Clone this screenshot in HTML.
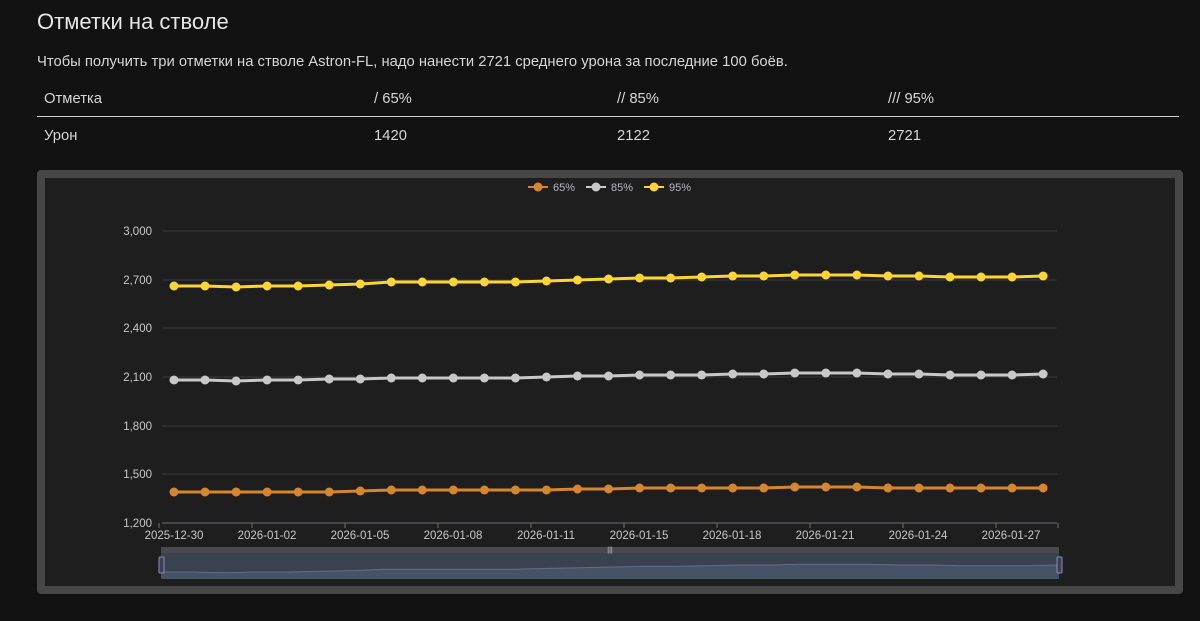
<!DOCTYPE html>
<html><head><meta charset="utf-8"><style>
body{margin:0;width:1200px;height:621px;background:#121212;font-family:"Liberation Sans","DejaVu Sans",sans-serif;color:#ddd;overflow:hidden;position:relative}
h1{position:absolute;left:37px;top:9px;margin:0;font-weight:normal;font-size:22px;color:#e6e6e6}
.p{position:absolute;left:37px;top:54px;font-size:14.8px;color:#d6d6d6}
.row{position:absolute;left:37px;width:1142px;height:36px;font-size:14.8px;color:#d6d6d6}
.row span{position:absolute;top:11px}
.frame{position:absolute;left:37px;top:170px;width:1130px;height:408px;border:8px solid #474747;border-radius:4px;background:#1e1e1e}
svg{position:absolute;left:0;top:0}
</style></head><body>
<h1>Отметки на стволе</h1>
<div class="p">Чтобы получить три отметки на стволе Astron-FL, надо нанести 2721 среднего урона за последние 100 боёв.</div>
<div class="row" style="top:80px;border-bottom:1px solid #cfcfcf"><span style="left:7px">Отметка</span><span style="left:337px">/ 65%</span><span style="left:580px">// 85%</span><span style="left:851px">/// 95%</span></div>
<div class="row" style="top:117px"><span style="left:7px">Урон</span><span style="left:337px">1420</span><span style="left:580px">2122</span><span style="left:851px">2721</span></div>
<div class="frame"></div>
<svg id="s" width="1200" height="621" font-family="Liberation Sans, sans-serif" font-size="11.5"></svg>
<script>
var s=document.getElementById('s'),h='';
var ys=[231,280,328,377,426,474,523],lb=['3,000','2,700','2,400','2,100','1,800','1,500','1,200'];
for(var i=0;i<7;i++){h+='<line x1="162" x2="1057" y1="'+ys[i]+'" y2="'+ys[i]+'" stroke="'+(i==6?'#6e7079':'#3a3a40')+'"/>';h+='<text x="152" y="'+(ys[i]+4)+'" text-anchor="end" fill="#c8c8c8">'+lb[i]+'</text>';}
var d=['2025-12-30','2026-01-02','2026-01-05','2026-01-08','2026-01-11','2026-01-15','2026-01-18','2026-01-21','2026-01-24','2026-01-27'];
for(i=0;i<10;i++){var x=174+i*93;h+='<line x1="'+(x-15)+'" x2="'+(x-15)+'" y1="523" y2="528" stroke="#6e7079"/><text x="'+x+'" y="539" text-anchor="middle" fill="#c8c8c8">'+d[i]+'</text>';}
h+='<line x1="1058" x2="1058" y1="523" y2="528" stroke="#6e7079"/>';
var y95=[286,286,287,286,286,285,284,282,282,282,282,282,281,280,279,278,278,277,276,276,275,275,275,276,276,277,277,277,276];
function ser(arr,c){var pts=arr.map(function(y,k){return (174+k*31.04)+','+y}).join(' ');var r='<polyline points="'+pts+'" fill="none" stroke="'+c+'" stroke-width="3"/>';arr.forEach(function(y,k){r+='<circle cx="'+(174+k*31.04)+'" cy="'+y+'" r="4.5" fill="'+c+'"/>'});return r;}
var y85=y95.map(function(y){return Math.round(380+(y-286)*0.6)});
var y65=y95.map(function(y){return Math.round(492+(y-286)*0.45)});
h+=ser(y65,'#d6862e')+ser(y85,'#c8c8c8')+ser(y95,'#fdd535');
var L=[[528,'#d6862e','65%'],[586,'#c8c8c8','85%'],[644,'#fdd535','95%']];
L.forEach(function(l){h+='<line x1="'+l[0]+'" x2="'+(l[0]+20)+'" y1="187" y2="187" stroke="'+l[1]+'" stroke-width="2"/><circle cx="'+(l[0]+10)+'" cy="187" r="4.5" fill="'+l[1]+'"/><text x="'+(l[0]+25)+'" y="191" fill="#b8b8c0" font-size="11">'+l[2]+'</text>'});
h+='<rect x="161" y="547" width="898" height="6" fill="#4a4a4e"/><rect x="161" y="553" width="898" height="26" fill="#3a4250"/>';
var pp='M161,572 ';for(var k=0;k<29;k++){pp+='L'+(161+k*32.07)+','+(572-(286-y95[k])*0.7)+' ';}
h+='<path d="'+pp+'L1059,579 L161,579Z" fill="#475264"/><path d="'+pp+'" fill="none" stroke="#5f6f8a"/>';
h+='<rect x="159" y="557" width="5" height="16" rx="1" fill="#3a3f5a" stroke="#8a8fb0"/><rect x="1057" y="557" width="5" height="16" rx="1" fill="#3a3f5a" stroke="#8a8fb0"/>';
h+='<text x="610" y="552" text-anchor="middle" fill="#ccc" font-size="7">|||</text>';
s.innerHTML=h;
</script>
</body></html>
